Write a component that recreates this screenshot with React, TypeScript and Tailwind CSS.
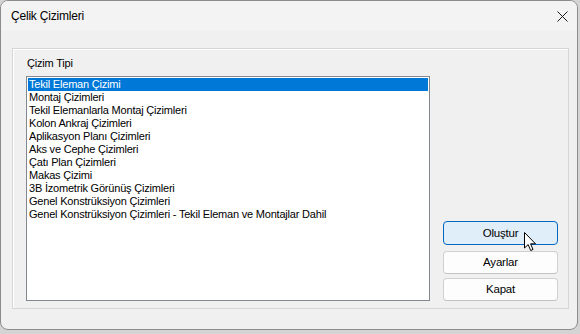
const items = [
  'Tekil Eleman Çizimi',
  'Montaj Çizimleri',
  'Tekil Elemanlarla Montaj Çizimleri',
  'Kolon Ankraj Çizimleri',
  'Aplikasyon Planı Çizimleri',
  'Aks ve Cephe Çizimleri',
  'Çatı Plan Çizimleri',
  'Makas Çizimi',
  '3B İzometrik Görünüş Çizimleri',
  'Genel Konstrüksiyon Çizimleri',
  'Genel Konstrüksiyon Çizimleri - Tekil Eleman ve Montajlar Dahil',
];

const font = { fontFamily: '"Liberation Sans", Arial, sans-serif' };

export default function App() {
  return (
    <div className="w-[580px] h-[334px] bg-[#d4d4d4] overflow-hidden" style={font}>
      <div className="relative w-[578px] h-[330px] bg-[#f0f0f0] border border-[#8c8c8c] rounded-lg overflow-hidden flex flex-col text-[11px] tracking-[-0.2px] text-black">
        {/* title bar */}
        <div className="h-[30px] shrink-0 bg-[#f3f3f3] flex items-center justify-between pl-[10px] pr-[9px]">
          <span className="leading-[13px] text-[12px]">Çelik Çizimleri</span>
          <svg width="11" height="11" viewBox="0 0 11 11">
            <path d="M0.5 0.5 L10.5 10.5 M10.5 0.5 L0.5 10.5" stroke="#1a1a1a" strokeWidth="1" />
          </svg>
        </div>

        {/* body */}
        <div className="flex-1 pl-[11px] pt-[17px]">
          <div className="w-[557px] h-[261px] border border-[#d6d6d6] shadow-[inset_1px_1px_0_#ffffff] pl-[13px] pr-[10px] pt-[8px] pb-[7px] flex flex-col">
            <div className="leading-[13px] ml-[1px]">Çizim Tipi</div>
            <div className="flex-1 flex gap-[13px] mt-[6px] min-h-0">
              <div className="w-[404px] h-full bg-white border border-[#828790] p-[1px] overflow-hidden">
                {items.map((item, i) => (
                  <div
                    key={item}
                    className={
                      i === 0
                        ? 'h-[13px] leading-[13px] pl-[1px] bg-[#0078d7] text-white whitespace-nowrap'
                        : 'h-[13px] leading-[13px] pl-[1px] whitespace-nowrap'
                    }
                  >
                    {item}
                  </div>
                ))}
              </div>

              <div className="w-[115px] flex flex-col justify-end text-[11.5px]">
                <button className="relative h-[24px] rounded-[4px] border border-[#0067c0] bg-[#e0eef9] leading-[13px]">
                  Oluştur
                  <svg
                    width="13"
                    height="20"
                    viewBox="0 0 13 20"
                    className="absolute left-[80px] top-[10px]"
                  >
                    <path
                      d="M0.5 0.5 L0.5 16 L4.2 12.6 L6.7 18.5 L9 17.5 L6.6 11.8 L11.5 11.8 Z"
                      fill="#ffffff"
                      stroke="#000000"
                      strokeWidth="1"
                    />
                  </svg>
                </button>
                <button className="h-[23px] mt-[6px] rounded-[4px] border border-[#d0d0d0] border-b-[#c2c2c2] bg-[#fdfdfd] leading-[13px]">
                  Ayarlar
                </button>
                <button className="h-[23px] mt-[4px] rounded-[4px] border border-[#d0d0d0] border-b-[#c2c2c2] bg-[#fdfdfd] leading-[13px]">
                  Kapat
                </button>
              </div>
            </div>
          </div>
        </div>
      </div>
    </div>
  );
}
